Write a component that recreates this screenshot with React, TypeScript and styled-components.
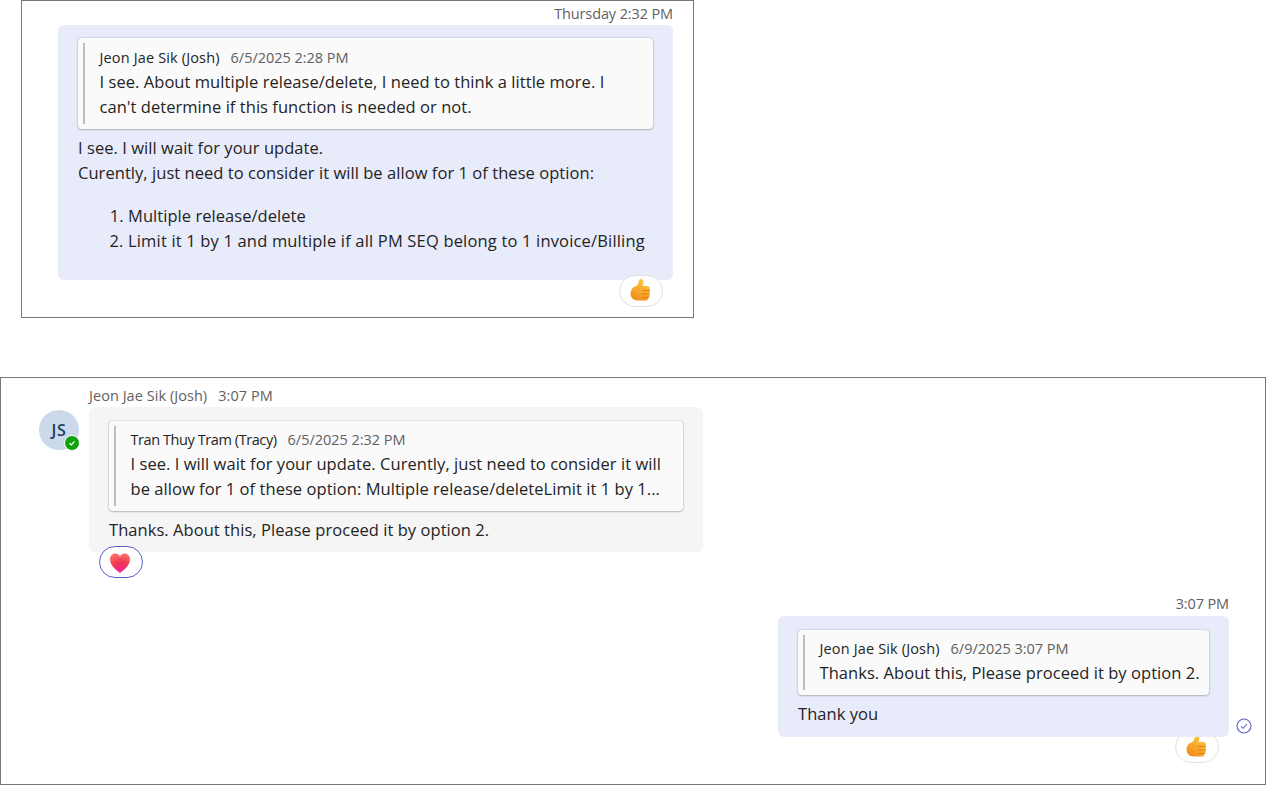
import * as React from 'react';
import styled, { createGlobalStyle } from 'styled-components';

const GlobalStyle = createGlobalStyle`
    html, body {
        margin: 0;
        padding: 0;
        background: #fff;
    }
    body {
        font-family: "Open Sans", "Noto Sans", "Liberation Sans", sans-serif;
        color: #242424;
    }
`;

const Page = styled.div`
    width: 1266px;
    height: 785px;
    overflow: hidden;
`;

const TopFrame = styled.section`
    box-sizing: border-box;
    width: 673px;
    height: 318px;
    margin-left: 21px;
    border: 1px solid #767676;
    padding: 4px 20px 0 36px;
    display: flex;
    flex-direction: column;
    align-items: flex-end;
`;

const BottomFrame = styled.section`
    box-sizing: border-box;
    width: 1266px;
    height: 408px;
    margin-top: 59px;
    border: 1px solid #767676;
    padding: 9px 36px 0 38px;
    display: flex;
    flex-direction: column;
`;

const Stamp = styled.div<{ $height: number }>`
    font-size: 14.5px;
    line-height: 18px;
    height: ${(p) => p.$height}px;
    color: #616161;
    letter-spacing: -0.12px;
`;

const Bubble = styled.div<{ $mine?: boolean; $width: number; $top: number; $bottom: number }>`
    box-sizing: border-box;
    width: ${(p) => p.$width}px;
    padding: ${(p) => p.$top}px 20px ${(p) => p.$bottom}px;
    border-radius: 6px;
    background: ${(p) => (p.$mine ? '#e8ebfa' : '#f5f5f5')};
`;

const Quote = styled.div<{ $top: number }>`
    box-sizing: border-box;
    margin-bottom: 6px;
    padding: ${(p) => p.$top}px 12px 10px 21.5px;
    border-radius: 4px;
    background: #fafafa;
    box-shadow: 0 0 2px rgba(0, 0, 0, 0.24), 0 1px 2px rgba(0, 0, 0, 0.2);
    position: relative;

    &::before {
        content: '';
        position: absolute;
        left: 5px;
        top: 5px;
        bottom: 5px;
        width: 2px;
        background: #bdbdbd;
    }
`;

const QuoteHead = styled.div`
    display: flex;
    gap: 11px;
    height: 23px;
    font-size: 14.5px;
    line-height: 23px;
    white-space: nowrap;
`;

const QuoteAuthor = styled.span<{ $track: number }>`
    color: #242424;
    letter-spacing: ${(p) => p.$track}px;
`;

const QuoteDate = styled.span`
    color: #616161;
    letter-spacing: -0.03px;
`;

const BodyText = styled.div`
    font-size: 16.5px;
    line-height: 25px;
    letter-spacing: 0.05px;
    white-space: nowrap;
`;

const Steps = styled.ol`
    margin: 18px 0 0;
    padding: 0 0 0 50px;
    font-size: 16.5px;
    line-height: 25px;
    white-space: nowrap;
`;

const Step = styled.li<{ $track: number }>`
    letter-spacing: ${(p) => p.$track}px;
`;

const Reaction = styled.div<{ $active?: boolean; $inset?: number; $lift?: number }>`
    box-sizing: border-box;
    width: 44px;
    height: 32px;
    margin-top: ${(p) => -(p.$lift ?? 0)}px;
    margin-right: ${(p) => p.$inset ?? 0}px;
    border-radius: 16px;
    background: #fff;
    border: 1px solid ${(p) => (p.$active ? '#5b5fc7' : '#e0e0e0')};
    display: flex;
    align-items: center;
    justify-content: center;
`;

const Row = styled.div`
    display: flex;
    gap: 10px;
`;

const AvatarColumn = styled.div`
    width: 40px;
    padding-top: 23px;
    box-sizing: border-box;
`;

const Avatar = styled.div`
    width: 40px;
    height: 40px;
    border-radius: 50%;
    background: #ccd9ea;
    color: #1c3d66;
    font-size: 16px;
    font-weight: 600;
    letter-spacing: 0.6px;
    display: flex;
    align-items: center;
    justify-content: center;
    position: relative;
`;

const Presence = styled.div`
    position: absolute;
    right: -1px;
    bottom: -1px;
    width: 14px;
    height: 14px;
    border-radius: 50%;
    background: #13a10e;
    border: 1px solid #fff;
    display: flex;
    align-items: center;
    justify-content: center;
`;

const MessageColumn = styled.div`
    display: flex;
    flex-direction: column;
    align-items: flex-start;
`;

const MessageHead = styled.div`
    display: flex;
    gap: 11px;
    height: 20px;
    font-size: 14.5px;
    line-height: 18px;
    color: #616161;
    letter-spacing: 0.05px;
`;

const Below = styled.div`
    margin: -6px 0 0 10px;
`;

const MineBlock = styled.div`
    display: flex;
    flex-direction: column;
    align-items: flex-end;
    margin-top: 17px;
`;

const MineBubbleRow = styled.div`
    position: relative;
`;

const Delivered = styled.svg`
    position: absolute;
    right: -23px;
    bottom: 3px;
`;

function Thumb(): JSX.Element {
    return (
        <svg width="24" height="26" viewBox="1 1 24 26">
            <defs>
                <linearGradient id="thumbFill" x1="0.75" y1="0" x2="0.15" y2="1">
                    <stop offset="0" stopColor="#ffc83d" />
                    <stop offset="1" stopColor="#f08a1d" />
                </linearGradient>
                <filter id="thumbSoft">
                    <feGaussianBlur stdDeviation="0.3" />
                </filter>
            </defs>
            <g filter="url(#thumbSoft)">
                <path
                    d="M13 2c1.800 0 2.700 1.500 2.400 3.400-.2 1.300-.7 2.500-1 3.600h4.800c1.600 0 2.800 1.100 2.800 2.500 0 .8-.3 1.400-.7 1.900.5.500.7 1.100.7 1.800 0 .8-.4 1.500-.9 1.900.4.400.6 1 .6 1.600 0 .9-.5 1.600-1.200 2-.1 1.700-1.300 2.900-3 2.900H10c-4.600 0-7.500-2.800-7.500-7 0-3 1.500-5.200 3.700-6.900C8.600 10 10.300 7.400 10.900 4c.2-1.200.9-2 2.100-2z"
                    fill="url(#thumbFill)"
                />
                <path
                    d="M14.500 13.500h6.800M14.500 17h6.600M14.500 20.500h5.800"
                    stroke="#de7d14"
                    strokeWidth="1.100"
                    strokeLinecap="round"
                    fill="none"
                />
            </g>
        </svg>
    );
}

function Heart(): JSX.Element {
    return (
        <svg width="24" height="22" viewBox="1 -1 24 22">
            <defs>
                <radialGradient id="heartFill" cx="0.55" cy="0.9" r="0.85">
                    <stop offset="0" stopColor="#f0209e" />
                    <stop offset="0.55" stopColor="#f23a52" />
                    <stop offset="1" stopColor="#fb6a62" />
                </radialGradient>
                <filter id="heartSoft">
                    <feGaussianBlur stdDeviation="0.35" />
                </filter>
            </defs>
            <path
                filter="url(#heartSoft)"
                d="M12 21C9.500 19 2 14 2 7.500 2 4 4.300 1.500 7.300 1.500c2 0 3.700 1.100 4.700 3 1-1.900 2.700-3 4.700-3 3 0 5.300 2.500 5.300 6C22 14 14.500 19 12 21z"
                fill="url(#heartFill)"
            />
        </svg>
    );
}

export default function App(): JSX.Element {
    return (
        <Page>
            <GlobalStyle />
            <TopFrame>
                <Stamp $height={20}>Thursday 2:32 PM</Stamp>
                <Bubble $mine $width={615} $top={13} $bottom={27}>
                    <Quote $top={8}>
                        <QuoteHead>
                            <QuoteAuthor $track={0.15}>Jeon Jae Sik (Josh)</QuoteAuthor>
                            <QuoteDate>6/5/2025 2:28 PM</QuoteDate>
                        </QuoteHead>
                        <BodyText>I see. About multiple release/delete, I need to think a little more. I</BodyText>
                        <BodyText>can't determine if this function is needed or not.</BodyText>
                    </Quote>
                    <BodyText>I see. I will wait for your update.</BodyText>
                    <BodyText>Curently, just need to consider it will be allow for 1 of these option:</BodyText>
                    <Steps>
                        <Step $track={0.05}>Multiple release/delete</Step>
                        <Step $track={0.17}>Limit it 1 by 1 and multiple if all PM SEQ belong to 1 invoice/Billing</Step>
                    </Steps>
                </Bubble>
                <Reaction $inset={10} $lift={5}>
                    <Thumb />
                </Reaction>
            </TopFrame>
            <BottomFrame>
                <Row>
                    <AvatarColumn>
                        <Avatar>
                            JS
                            <Presence>
                                <svg width="8" height="8" viewBox="0 0 8 8">
                                    <path d="M1.500 4.200l1.800 1.700 3.200-3.500" stroke="#fff" strokeWidth="1.200" fill="none" />
                                </svg>
                            </Presence>
                        </Avatar>
                    </AvatarColumn>
                    <MessageColumn>
                        <MessageHead>
                            <span>Jeon Jae Sik (Josh)</span>
                            <span>3:07 PM</span>
                        </MessageHead>
                        <Bubble $width={614} $top={14} $bottom={10}>
                            <Quote $top={7}>
                                <QuoteHead>
                                    <QuoteAuthor $track={-0.42}>Tran Thuy Tram (Tracy)</QuoteAuthor>
                                    <QuoteDate>6/5/2025 2:32 PM</QuoteDate>
                                </QuoteHead>
                                <BodyText>I see. I will wait for your update. Curently, just need to consider it will</BodyText>
                                <BodyText>be allow for 1 of these option: Multiple release/deleteLimit it 1 by 1...</BodyText>
                            </Quote>
                            <BodyText>Thanks. About this, Please proceed it by option 2.</BodyText>
                        </Bubble>
                        <Below>
                            <Reaction $active>
                                <Heart />
                            </Reaction>
                        </Below>
                    </MessageColumn>
                </Row>
                <MineBlock>
                    <Stamp $height={21}>3:07 PM</Stamp>
                    <MineBubbleRow>
                        <Bubble $mine $width={451} $top={14} $bottom={11}>
                            <Quote $top={7}>
                                <QuoteHead>
                                    <QuoteAuthor $track={0.15}>Jeon Jae Sik (Josh)</QuoteAuthor>
                                    <QuoteDate>6/9/2025 3:07 PM</QuoteDate>
                                </QuoteHead>
                                <BodyText>Thanks. About this, Please proceed it by option 2.</BodyText>
                            </Quote>
                            <BodyText>Thank you</BodyText>
                        </Bubble>
                        <Delivered width="16" height="16" viewBox="0 0 16 16">
                            <circle cx="8" cy="8" r="7" stroke="#5b5fc7" strokeWidth="1.100" fill="none" />
                            <path d="M5 8.300l2.100 2 3.900-4.300" stroke="#5b5fc7" strokeWidth="1.100" fill="none" />
                        </Delivered>
                    </MineBubbleRow>
                    <Reaction $inset={10} $lift={6}>
                        <Thumb />
                    </Reaction>
                </MineBlock>
            </BottomFrame>
        </Page>
    );
}
